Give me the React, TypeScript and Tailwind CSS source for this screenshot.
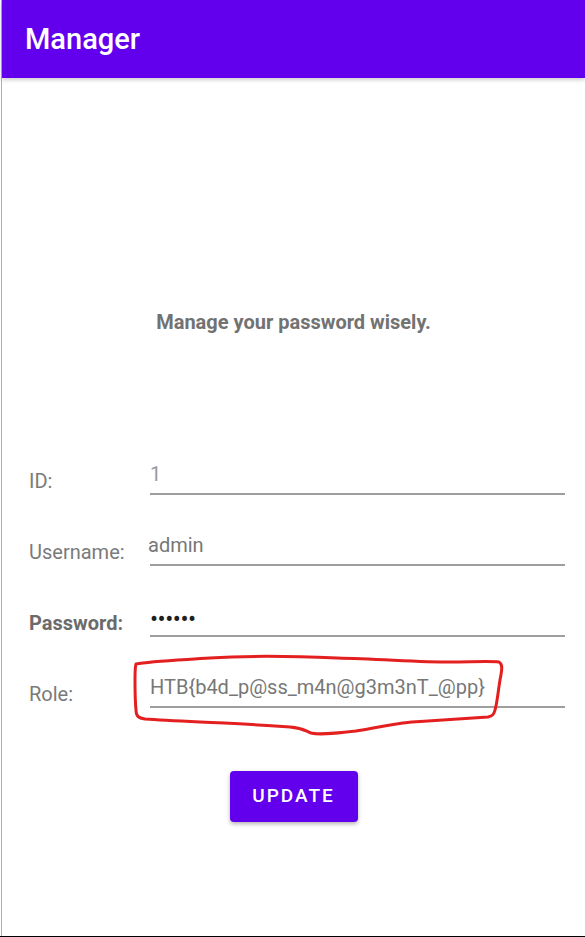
import React from 'react';

const rows = [
  { label: 'ID:', value: '1', valueClass: 'text-[20px] text-[#9a9a9a]', bold: false },
  { label: 'Username:', value: 'admin', valueClass: 'text-[20px] text-[#777777] -ml-[2px]', bold: false },
  { label: 'Password:', value: '••••••', valueClass: 'text-[24px] text-[#1f1f1f] tracking-[-0.5px] mt-[3px]', bold: true },
  { label: 'Role:', value: 'HTB{b4d_p@ss_m4n@g3m3nT_@pp}', valueClass: 'text-[20px] text-[#777777]', bold: false },
];

export default function App() {
  return (
    <div className="relative h-[937px] w-full flex flex-col bg-white font-['Roboto','Liberation_Sans',sans-serif]">
      <div className="flex flex-1">
        {/* left edge strip */}
        <div className="w-px bg-white" />
        <div className="w-px bg-[#6ee05a]" />

        <div className="flex-1 flex flex-col">
          {/* Toolbar */}
          <header className="h-[78px] bg-[#6200ee] flex items-center pl-[23px] shadow-[0_2px_4px_rgba(0,0,0,0.2)] z-10">
            <h1 className="text-white text-[29px] font-medium leading-none">Manager</h1>
          </header>

          {/* Body */}
          <p className="mt-[232px] text-center text-[20px] leading-6 font-bold text-[#727272]">
            Manage your password wisely.
          </p>

          <div className="mt-[128px] flex flex-col gap-[38px] pl-[27px] pr-[20px]">
            {rows.map(r => (
              <div key={r.label} className="flex items-center h-[33px]">
                <div className={`w-[121px] text-[20px] leading-6 mt-[4px] ${r.bold ? 'font-bold text-[#6b6b6b]' : 'text-[#7a7a7a]'}`}>
                  {r.label}
                </div>
                <div className="flex-1 h-[33px] border-b-2 border-[#9e9e9e] pb-[7px]">
                  <div className={`leading-6 h-6 ${r.valueClass}`}>{r.value}</div>
                </div>
              </div>
            ))}
          </div>

          <div className="mt-[63px] flex justify-center">
            <button className="w-[128px] h-[51px] rounded-[4px] bg-[#6200ee] text-white text-[19px] font-medium tracking-[2px] shadow-[0_2px_4px_rgba(0,0,0,0.3)]">
              UPDATE
            </button>
          </div>
        </div>
      </div>
      <div className="h-px bg-black" />

      {/* hand-drawn annotation */}
      <svg className="absolute inset-0 pointer-events-none" width="585" height="937" viewBox="0 0 585 937">
        <path
          d="M136 664 C150 661 180 660 210 658 C240 656 290 656 337 658 C380 659 420 662 450 662 C470 662 490 661 499 662 C503 664 502 670 500 680 C498 692 497 704 495 710 C494 714 493 716 488 717 C470 718 440 720 412 722 C385 725 370 729 356 731 C330 734 318 735 311 733 C304 730 302 728 290 727 C260 725 230 723 200 722 C180 721 160 720 145 719 C138 718 136 716 136 710 C135 700 135 690 135 680 C135 672 135 667 136 664 Z"
          fill="none"
          stroke="#e3201f"
          strokeWidth="3"
          strokeLinejoin="round"
        />
      </svg>
    </div>
  );
}
